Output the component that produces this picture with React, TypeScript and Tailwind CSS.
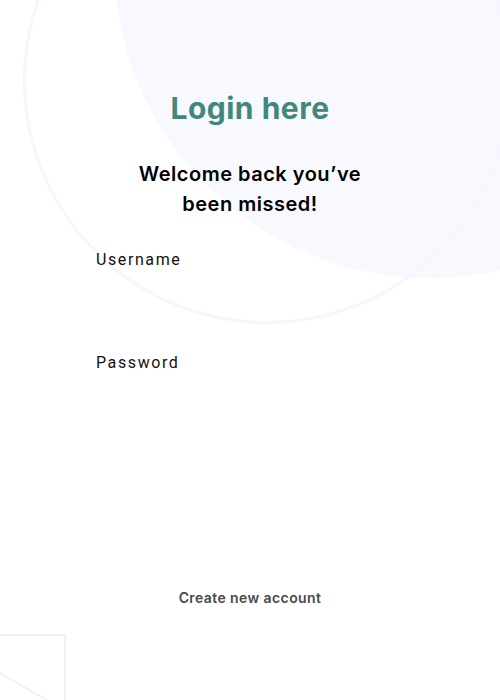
import React from "react";

export default function App() {
  return (
    <div className="relative w-[500px] h-[700px] overflow-hidden bg-white" style={{ fontFamily: "Inter, 'Noto Sans', sans-serif" }}>
      {/* decorative background */}
      <div className="absolute left-[114px] top-[-354px] w-[632px] h-[632px] rounded-full bg-[#f8f9fe]" />
      <div className="absolute left-[23px] top-[-164px] w-[488px] h-[488px] rounded-full border-[3px] border-[#f5f6fe]" />
      <div className="absolute left-[-100px] top-[634px] w-[166px] h-[166px] border-2 border-[#eef0fc]" />
      <div className="absolute left-0 top-[672px] w-[200px] h-[200px] border-t-2 border-[#eef0fc] origin-top-left rotate-[30deg]" />

      <div className="relative flex flex-col items-center">
        <h1 className="mt-[88px] text-[30px] leading-[40px] font-bold text-[#41877c] tracking-[0.5px]">Login here</h1>
        <p className="mt-[31px] w-[250px] text-center text-[20px] leading-[30px] font-semibold text-black tracking-[0.5px]">
          Welcome back you’ve been missed!
        </p>
        <div className="mt-[31px] w-[308px] flex flex-col">
          <label className="text-[16px] leading-[20px] tracking-[1.6px] text-[#111]" style={{ fontFamily: "Roboto, sans-serif" }}>Username</label>
          <div className="h-[83px]" />
          <label className="text-[16px] leading-[20px] tracking-[1.6px] text-[#111]" style={{ fontFamily: "Roboto, sans-serif" }}>Password</label>
        </div>
        <a className="mt-[215px] text-[14px] leading-[20px] font-semibold text-[#494949] tracking-[0.4px]">Create new account</a>
      </div>
    </div>
  );
}
